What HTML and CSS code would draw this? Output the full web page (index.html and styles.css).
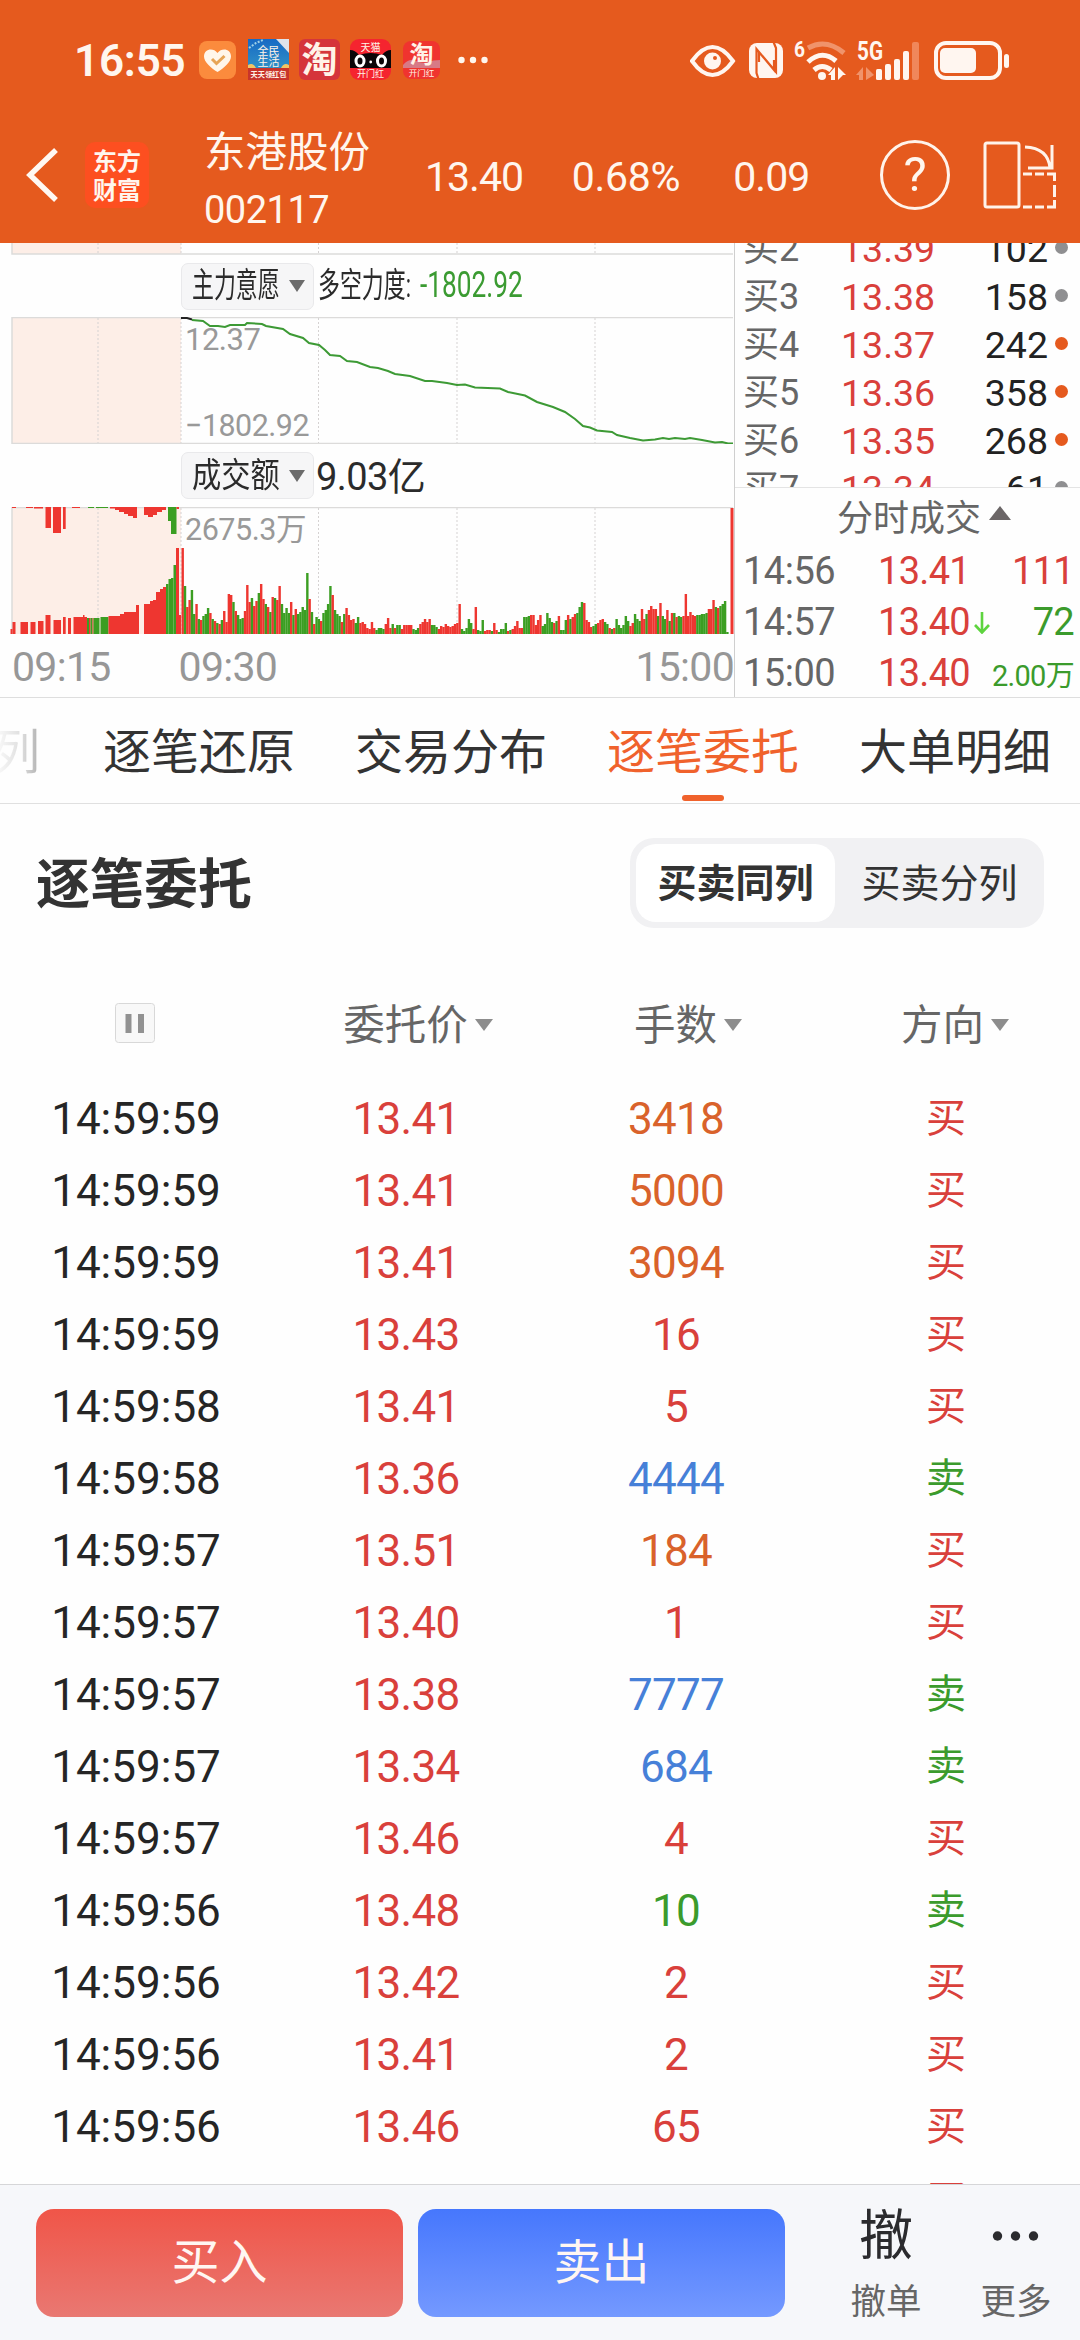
FILE: index.html
```html
<!DOCTYPE html>
<html lang="zh-CN">
<head>
    <meta charset="UTF-8">
    <meta name="viewport" content="width=device-width, initial-scale=1.0">
    <title>东港股份 002117</title>
    <link rel="stylesheet" href="styles.css">
</head>
<body>
    <header class="header">
        <div class="status">
            <span class="clock">16:55</span>
            <div class="notices">
                <svg class="app-sm" viewBox="0 0 37 38">
                    <rect width="37" height="38" rx="8" fill="#fb8b3d"/>
                    <path d="M18.500 31C12 27 5 21 5 15.500C5 8 14 6 18.500 12C23 6 32 8 32 15.500C32 21 25 27 18.500 31Z" fill="#fff6ea"/>
                    <path d="M13 18l4.500 4.500 8-7.500" fill="none" stroke="#e7a455" stroke-width="3"/>
                </svg>
                <svg class="app" viewBox="0 0 41 41">
                    <defs>
                        <linearGradient id="sky" x1="0" y1="0" x2="0" y2="1">
                            <stop offset="0" stop-color="#1769c4"/>
                            <stop offset="1" stop-color="#3aa0c8"/>
                        </linearGradient>
                    </defs>
                    <rect width="41" height="41" fill="url(#sky)"/>
                    <path d="M1 9l7-5 7-3" stroke="#9fd0e6" stroke-width="2" stroke-dasharray="2 1.500" fill="none"/>
                    <path d="M28 0h13v14z" fill="#dfe3ea"/>
                    <path d="M0 26q5-3 8 3h25q3-6 8-3v5H0z" fill="#f2c464"/>
                    <rect y="29" width="41" height="12" fill="#c8342b"/>
                    <text x="20.500" y="16" class="app-text" font-size="11">全民</text>
                    <text x="20.500" y="27" class="app-text" font-size="11">生活</text>
                    <text x="20.500" y="38" class="app-text bold" font-size="7.200" fill="#ffe9bd">天天领红包</text>
                </svg>
                <svg class="app" viewBox="0 0 41 41">
                    <rect width="41" height="41" rx="6" fill="#d5353b"/>
                    <text x="20.500" y="33.500" class="app-text bold" font-size="36">淘</text>
                </svg>
                <svg class="app" viewBox="0 0 41 41">
                    <rect width="41" height="41" rx="9" fill="#f5242f"/>
                    <path d="M0 11q5 0 9 5q12-4 23 0q4-5 9-5v18H0z" fill="#0b0608"/>
                    <text x="20.500" y="12" class="app-text" font-size="10">天猫</text>
                    <ellipse cx="10" cy="22" rx="4" ry="5" fill="none" stroke="#fff" stroke-width="3"/>
                    <ellipse cx="31.500" cy="22" rx="4" ry="5" fill="none" stroke="#fff" stroke-width="3"/>
                    <circle cx="20.700" cy="23" r="1.400" fill="#fff"/>
                    <text x="20.500" y="38" class="app-text" font-size="9">开门红</text>
                </svg>
                <svg class="app-sm last" viewBox="0 0 37 38">
                    <rect width="37" height="38" rx="8" fill="#f0342f"/>
                    <path d="M0 24q6-7 13-4t12 1 12-2v8H0z" fill="#d77a86"/>
                    <text x="18.500" y="22" class="app-text bold" font-size="24" fill="#ffe3cf">淘</text>
                    <text x="18.500" y="35" class="app-text" font-size="8.500">开门红</text>
                </svg>
                <svg class="dots" viewBox="0 0 30 8">
                    <circle cx="3.500" cy="4" r="3.200"/><circle cx="15" cy="4" r="3.200"/><circle cx="26.500" cy="4" r="3.200"/>
                </svg>
            </div>
            <svg class="system" viewBox="0 0 320 42">
                <!-- eye -->
                <path d="M2 22Q12 8 22.500 8T43 22Q33 36 22.500 36T2 22Z" fill="none" stroke="#fff6f0" stroke-width="4"/>
                <circle cx="22.500" cy="22" r="8.500"/>
                <circle cx="25" cy="19" r="2" fill="#e55a1e"/>
                <!-- nfc -->
                <rect x="59" y="4" width="34" height="35" rx="8"/>
                <path d="M68.500 40L66.500 34V10L84 31V21M83.500 3L86 9V33L69 13V23" fill="none" stroke="#e55a1e" stroke-width="2.200"/>
                <!-- wifi -->
                <text x="104" y="18" class="sys-text" font-size="22" textLength="11" lengthAdjust="spacingAndGlyphs">6</text>
                <path d="M118 9Q136 -1 154 14" fill="none" stroke="#f0936b" stroke-width="5"/>
                <path d="M118 23Q132 10 146 22" fill="none" stroke="#fff6f0" stroke-width="5"/>
                <path d="M124 31Q132 24 141 31" fill="none" stroke="#fff6f0" stroke-width="5"/>
                <circle cx="132" cy="37" r="4"/>
                <path d="M138 36l7-8v13h-4v-5zM148 28l8 8h-3l-5 5z"/>
                <!-- 5G signal -->
                <text x="167" y="21" class="sys-text" font-size="26" textLength="26" lengthAdjust="spacingAndGlyphs">5G</text>
                <path d="M166 36l7-8v13h-4v-5zM176 28l8 8-8 5z" fill="#f0936b"/>
                <rect x="186" y="30" width="6" height="11" rx="1.500"/>
                <rect x="195" y="25" width="6" height="16" rx="2"/>
                <rect x="204" y="20" width="6" height="21" rx="2"/>
                <rect x="213" y="12" width="6" height="29" rx="2"/>
                <rect x="222" y="3" width="7" height="38" rx="2" fill="#f0875b"/>
                <!-- battery -->
                <rect x="246" y="4" width="64" height="35" rx="10" fill="none" stroke="#fff6f0" stroke-width="4"/>
                <rect x="250" y="9" width="36" height="25" rx="5"/>
                <rect x="314" y="15" width="5" height="14" rx="2.500"/>
            </svg>
        </div>
        <div class="stockbar">
            <svg class="back" viewBox="0 0 34 56">
                <path d="M30 3L4 28L30 53" fill="none" stroke="#fff8f2" stroke-width="5.500"/>
            </svg>
            <div class="logo"><span>东方</span><span>财富</span></div>
            <div class="stock">
                <div class="stock-name">东港股份</div>
                <div class="stock-code">002117</div>
            </div>
            <div class="quote">
                <span>13.40</span>
                <span>0.68%</span>
                <span>0.09</span>
            </div>
            <div class="help">?</div>
            <svg class="rotate" viewBox="0 0 74 70">
                <g fill="none" stroke="#fff3ea" stroke-width="3">
                    <rect x="2" y="3" width="34" height="64" rx="2"/>
                    <path d="M42 7Q65 8 67 28M69 5V28H45"/>
                    <path d="M40 34h9M52 34h9M64 34h7.500v7M71.500 45v12M71.500 60v7H64M61 67h-9M49 67h-9"/>
                </g>
            </svg>
        </div>
    </header>

    <section class="market">
        <div class="charts">
            <svg class="strip" viewBox="0 0 734 12">
                <rect x="12" y="0" width="169" height="11" fill="#fdeee7"/>
                <path class="frame" d="M12 0V11H733"/>
                <path class="grid" d="M98 0V11M181 0V11M318.500 0V11M457 0V11M595 0V11"/>
            </svg>
            <div class="indicator">
                <button class="pick"><span class="narrow">主力意愿</span><i class="down"></i></button>
                <span class="narrow force">多空力度:</span>
                <span class="force-value">-1802.92</span>
            </div>
            <svg class="pane" viewBox="0 0 734 127">
                <rect x="12" y="1" width="169" height="126" fill="#fdeee7"/>
                <path class="grid" d="M98 1V126M181 1V126M318.500 1V126M457 1V126M595 1V126"/>
                <path class="frame" d="M733 .500H12V126.500H733"/>
                <path d="M181 1L187 1 192 2.500" fill="none" stroke="#222" stroke-width="2"/>
                <polyline class="force-line" points="192,3 203,4 210,9 218,9 225,10 230,8 245,8 247,6 262,7 266,9 283,12 290,17 303,21 309,26 319,28 325,33 330,38 340,39 347,44 357,45 370,50 378,51 388,54 395,57 410,59 425,64 432,64 447,66 457,68 465,67.500 475,70.500 500,71.500 508,75 525,78.500 537,85 553,90 565,95 575,102 583,109 590,110.500 597,113.500 612,115 617,118 630,121 643,123.500 655,122.500 663,121 669,122 675,121 685,122 690,121 702,123 715,125.500 722,125 728,126.500 733,126.500"/>
                <text x="185" y="33" class="scale">12.37</text>
                <text x="185" y="119" class="scale" textLength="124" lengthAdjust="spacingAndGlyphs">−1802.92</text>
            </svg>
            <div class="indicator amount">
                <button class="pick"><span class="narrow wide">成交额</span><i class="down"></i></button>
                <span class="total">9.03亿</span>
            </div>
            <svg class="pane" viewBox="0 0 734 127">
                <rect x="12" y="0" width="169" height="127" fill="#fdeee7"/>
                <path class="grid" d="M98 1V126M181 1V126M318.500 1V126M457 1V126M595 1V126"/>
                <path class="frame" d="M12 127V.500H733"/>
                <g id="bars"></g>
                <text x="185" y="33" class="scale" textLength="121" lengthAdjust="spacingAndGlyphs">2675.3万</text>
            </svg>
            <div class="axis"><span>09:15</span><span class="open">09:30</span><span class="close">15:00</span></div>
        </div>

        <div class="depth">
            <div class="book">
                <div class="level"><span>买2</span><b>13.39</b><em>102</em><i></i></div>
                <div class="level"><span>买3</span><b>13.38</b><em>158</em><i></i></div>
                <div class="level"><span>买4</span><b>13.37</b><em>242</em><i class="hot"></i></div>
                <div class="level"><span>买5</span><b>13.36</b><em>358</em><i class="hot"></i></div>
                <div class="level"><span>买6</span><b>13.35</b><em>268</em><i class="hot"></i></div>
                <div class="level"><span>买7</span><b>13.34</b><em>61</em><i></i></div>
            </div>
            <div class="ticks">
                <div class="ticks-title">分时成交<i class="up"></i></div>
                <div class="tick"><span>14:56</span><b>13.41</b><em class="red">111</em></div>
                <div class="tick">
                    <span>14:57</span>
                    <b>13.40<svg class="fall" viewBox="0 0 16 22"><path d="M8 0V20M1 13L8 20.500L15 13" fill="none" stroke="#5ed43f" stroke-width="2.600"/></svg></b>
                    <em class="green">72</em>
                </div>
                <div class="tick"><span>15:00</span><b>13.40</b><em class="green small">2.00万</em></div>
            </div>
        </div>
    </section>

    <nav class="tabs">
        <a class="cut">列</a>
        <a>逐笔还原</a>
        <a>交易分布</a>
        <a class="active">逐笔委托</a>
        <a>大单明细</a>
    </nav>

    <section class="orders">
        <div class="orders-head">
            <h2>逐笔委托</h2>
            <div class="switch">
                <button class="on">买卖同列</button>
                <button>买卖分列</button>
            </div>
        </div>
        <table>
            <thead>
                <tr>
                    <th><svg class="pause" viewBox="0 0 40 40"><rect x=".500" y=".500" width="39" height="39" rx="3" fill="#f8f8f8" stroke="#d8d8d8"/><path d="M13.500 11v19M26 11v19" stroke="#919191" stroke-width="6"/></svg></th>
                    <th class="sort">委托价<i class="down"></i></th>
                    <th class="sort">手数<i class="down"></i></th>
                    <th class="sort dir">方向<i class="down"></i></th>
                </tr>
            </thead>
            <tbody>
                <tr><td>14:59:59</td><td>13.41</td><td class="big">3418</td><td class="buy">买</td></tr>
                <tr><td>14:59:59</td><td>13.41</td><td class="big">5000</td><td class="buy">买</td></tr>
                <tr><td>14:59:59</td><td>13.41</td><td class="big">3094</td><td class="buy">买</td></tr>
                <tr><td>14:59:59</td><td>13.43</td><td class="buy">16</td><td class="buy">买</td></tr>
                <tr><td>14:59:58</td><td>13.41</td><td class="buy">5</td><td class="buy">买</td></tr>
                <tr><td>14:59:58</td><td>13.36</td><td class="block">4444</td><td class="sell">卖</td></tr>
                <tr><td>14:59:57</td><td>13.51</td><td class="big">184</td><td class="buy">买</td></tr>
                <tr><td>14:59:57</td><td>13.40</td><td class="buy">1</td><td class="buy">买</td></tr>
                <tr><td>14:59:57</td><td>13.38</td><td class="block">7777</td><td class="sell">卖</td></tr>
                <tr><td>14:59:57</td><td>13.34</td><td class="block">684</td><td class="sell">卖</td></tr>
                <tr><td>14:59:57</td><td>13.46</td><td class="buy">4</td><td class="buy">买</td></tr>
                <tr><td>14:59:56</td><td>13.48</td><td class="sell">10</td><td class="sell">卖</td></tr>
                <tr><td>14:59:56</td><td>13.42</td><td class="buy">2</td><td class="buy">买</td></tr>
                <tr><td>14:59:56</td><td>13.41</td><td class="buy">2</td><td class="buy">买</td></tr>
                <tr><td>14:59:56</td><td>13.46</td><td class="buy">65</td><td class="buy">买</td></tr>
                <tr class="peek"><td>14:59:55</td><td>13.41</td><td class="buy">34</td><td class="buy">买</td></tr>
            </tbody>
        </table>
    </section>

    <footer class="actions">
        <button class="trade buy-btn">买入</button>
        <button class="trade sell-btn">卖出</button>
        <div class="action"><span class="glyph">撤</span><span>撤单</span></div>
        <div class="action more">
            <svg class="glyph" viewBox="0 0 54 54"><circle cx="8.500" cy="27" r="4.700"/><circle cx="26.500" cy="27" r="4.700"/><circle cx="44.500" cy="27" r="4.700"/></svg>
            <span>更多</span>
        </div>
    </footer>

    <script src="script.js"></script>
</body>
</html>
```

FILE: styles.css
```css
* {
    margin: 0;
    padding: 0;
    box-sizing: border-box;
}

body {
    width: 1080px;
    height: 2340px;
    overflow: hidden;
    display: flex;
    flex-direction: column;
    background: #fefefe;
    color: #333;
    font-family: Roboto, "Noto Sans CJK SC", sans-serif;
}

button {
    border: 0;
    background: none;
    color: inherit;
    font-family: inherit;
}

b, em, i {
    font-weight: 400;
    font-style: normal;
}

svg {
    display: block;
    flex: none;
}

/* Header */
.header {
    height: 243px;
    flex: none;
    background: #e55a1e;
    color: #fff6ee;
}

.status {
    height: 119px;
    display: flex;
    align-items: center;
    padding-left: 74px;
}

.clock {
    width: 125px;
    padding-top: 2px;
    font-size: 44px;
    font-weight: 600;
    letter-spacing: -0.2px;
    line-height: 50px;
}

.notices {
    display: flex;
    align-items: center;
    width: 491px;
}

.app-sm {
    width: 37px;
    height: 38px;
    margin-right: 12px;
}

.app {
    width: 41px;
    height: 41px;
    margin-right: 10px;
}

.app-sm.last {
    margin: 0 18px 0 2px;
}

.app-text {
    text-anchor: middle;
    fill: #fff3e8;
}

.bold {
    font-weight: 700;
}

.dots {
    width: 30px;
    height: 8px;
    fill: #fff6ee;
}

.system {
    width: 320px;
    height: 42px;
    fill: #fff6f0;
}

.sys-text {
    font-weight: 700;
}

.stockbar {
    height: 112px;
    display: flex;
    align-items: center;
    padding-left: 26px;
}

.back {
    width: 34px;
    height: 56px;
    margin-right: 25px;
}

.logo {
    width: 64px;
    height: 66px;
    border-radius: 10px;
    background: #fd4f20;
    display: flex;
    flex-direction: column;
    align-items: center;
    justify-content: center;
    font-family: "Noto Sans CJK SC", sans-serif;
    font-size: 24px;
    font-weight: 700;
    line-height: 29px;
    padding-bottom: 2px;
}

.stock {
    width: 220px;
    padding: 14px 0 0 55px;
    white-space: nowrap;
}

.stock-name {
    font-size: 41.5px;
    line-height: 56px;
}

.stock-code {
    font-size: 38px;
    line-height: 58px;
    letter-spacing: -0.5px;
}

.quote {
    display: flex;
    width: 511px;
    padding: 3px 0 0 56px;
    font-size: 41px;
}

.quote span {
    width: 148px;
    letter-spacing: -1px;
}

.quote span:nth-child(2) {
    width: 163px;
    letter-spacing: -0.3px;
}

.help {
    width: 70px;
    height: 70px;
    border: 3px solid #fff3ea;
    border-radius: 50%;
    font-size: 49px;
    line-height: 64px;
    text-align: center;
}

.rotate {
    width: 74px;
    height: 70px;
    margin-left: 33px;
}

/* Charts */
.market {
    display: flex;
    flex: none;
    height: 455px;
    border-bottom: 1px solid #dedede;
}

.charts {
    width: 734px;
    flex: none;
}

.strip {
    width: 734px;
    height: 12px;
}

.pane {
    width: 734px;
    height: 127px;
}

.frame {
    fill: none;
    stroke: #dcdbda;
    stroke-width: 1.5;
}

.grid {
    stroke: #d5d2d2;
    stroke-width: 1;
    stroke-dasharray: 2 2;
}

.scale {
    font-size: 31px;
    letter-spacing: -0.5px;
    fill: #999;
}

.force-line {
    fill: none;
    stroke: #3d9a35;
    stroke-width: 2;
}

.indicator {
    height: 62px;
    display: flex;
    align-items: center;
    padding-left: 181px;
    color: #2b2b2b;
}

.indicator.amount {
    height: 63px;
}

.pick {
    width: 133px;
    height: 47px;
    border: 1px solid #e9e9eb;
    border-radius: 7px;
    background: #f6f6f7;
    display: flex;
    align-items: center;
    padding-left: 10px;
}

.narrow {
    display: block;
    width: 88px;
    font-size: 34px;
    line-height: 42px;
    padding-bottom: 2px;
    white-space: nowrap;
    text-align: left;
    transform: scaleX(0.645);
    transform-origin: left;
}

.narrow.wide {
    transform: scaleX(0.86);
}

.force {
    margin-left: 4px;
    width: 102px;
}

.force-value {
    width: 102px;
    font-size: 37px;
    line-height: 42px;
    padding-bottom: 2px;
    color: #3b9b32;
    white-space: nowrap;
    transform: scaleX(0.71);
    transform-origin: left;
}

.total {
    padding: 0 0 5px 2px;
    font-size: 38px;
    letter-spacing: -0.6px;
}

.down {
    display: inline-block;
    border: 8px solid transparent;
    border-top: 12px solid #6b6b6b;
    border-bottom: 0;
}

.pick .down {
    margin-left: 9px;
}

.axis {
    height: 63px;
    display: flex;
    align-items: center;
    padding: 2px 0 0 12px;
    font-size: 41px;
    letter-spacing: -0.7px;
    color: #979797;
}

.axis .open {
    margin-left: 68px;
}

.axis .close {
    margin-left: auto;
}

/* Order book */
.depth {
    flex: 1;
    border-left: 1px solid #cfcfcf;
}

.book {
    height: 245px;
    overflow: hidden;
    border-bottom: 1px solid #e4e4e4;
    padding-left: 8px;
}

.level {
    height: 48px;
    display: grid;
    grid-template-columns: 98px 110px 97px 13px;
    align-items: center;
    font-size: 37.5px;
    line-height: 48px;
}

/* the list is scrolled half a row */
.level:first-child {
    margin-top: -18px;
}

.level span {
    color: #666;
    font-size: 36px;
    white-space: nowrap;
}

.level b {
    color: #d9403b;
}

.level em {
    color: #222;
    text-align: right;
}

.level i {
    width: 13px;
    height: 13px;
    margin: -4px 0 0 7px;
    border-radius: 50%;
    background: #8f8f91;
}

.level i.hot {
    background: #e55a1e;
}

.ticks {
    padding: 0 6px 0 8px;
}

.ticks-title {
    height: 57px;
    display: flex;
    align-items: center;
    padding: 0 0 3px 94px;
    font-size: 36px;
    color: #666;
}

.up {
    border: 11px solid transparent;
    border-bottom: 14px solid #6b6667;
    border-top: 0;
    margin: -4px 0 0 8px;
}

.tick {
    height: 51px;
    display: flex;
    align-items: baseline;
    font-size: 38px;
    line-height: 53px;
}

.tick span {
    width: 135px;
    color: #666;
    letter-spacing: -0.5px;
}

.tick b {
    display: flex;
    align-items: center;
    color: #d9403b;
    letter-spacing: -0.7px;
}

.fall {
    width: 16px;
    height: 22px;
    margin-left: 4px;
}

.tick em {
    margin-left: auto;
    letter-spacing: -0.7px;
}

.tick .small {
    font-size: 29px;
}

.red {
    color: #d9403b;
}

.green {
    color: #3b9b2c;
}

/* Tabs */
.tabs {
    height: 106px;
    flex: none;
    display: flex;
    gap: 60px;
    border-bottom: 1px solid #e0e0e0;
    font-size: 48px;
    padding-top: 2px;
}

.tabs a {
    position: relative;
    flex: none;
    height: 103px;
    line-height: 105px;
}

.tabs .cut {
    width: 43px;
    padding-right: 3px;
    display: flex;
    justify-content: flex-end;
    background: linear-gradient(90deg, #f6f6f6, #dedede 50%, #a8a8a8);
    -webkit-background-clip: text;
    background-clip: text;
    color: transparent;
}

.tabs .active {
    color: #f0622c;
}

.tabs .active::after {
    content: "";
    position: absolute;
    left: 75px;
    bottom: 2px;
    width: 42px;
    height: 6px;
    border-radius: 3px;
    background: #f0622c;
}

/* Orders */
.orders {
    height: 1380px;
    flex: none;
    overflow: hidden;
}

.orders-head {
    height: 158px;
    display: flex;
    align-items: center;
    justify-content: space-between;
    padding: 0 36px;
}

.orders-head h2 {
    padding-top: 5px;
    font-size: 54px;
    line-height: 70px;
}

.switch {
    width: 414px;
    height: 90px;
    border-radius: 24px;
    background: #f1f1f3;
    display: flex;
    padding: 6px;
}

.switch button {
    width: 199px;
    padding-bottom: 7px;
    border-radius: 20px;
    font-size: 39px;
}

.switch .on {
    background: #fff;
    font-weight: 600;
}

.switch button:last-child {
    padding-left: 10px;
}

table {
    width: 1080px;
    table-layout: fixed;
    border-collapse: collapse;
}

th {
    height: 121px;
    padding-bottom: 2px;
    font-size: 41.5px;
    font-weight: 400;
    color: #666;
}

.pause {
    width: 40px;
    height: 40px;
    margin: 2px auto 0;
}

.sort {
    padding-left: 26px;
}

.sort.dir {
    padding-left: 20px;
}

.sort .down {
    border-width: 12px 9px 0;
    border-top-color: #8d8d8d;
    margin-left: 7px;
    vertical-align: 9px;
}

td {
    height: 72px;
    padding-left: 2px;
    font-size: 44px;
    line-height: 72px;
    text-align: center;
    color: #d9403b;
}

td:first-child {
    color: #252525;
}

td:nth-child(2) {
    letter-spacing: -0.7px;
}

td:nth-child(3) {
    letter-spacing: -0.7px;
}

td:last-child {
    font-size: 40px;
}

/* last row sits almost entirely under the bottom bar */
.peek td {
    padding-top: 2px;
}

td.big {
    color: #d9622b;
}

td.block {
    color: #4680d8;
}

td.buy {
    color: #d9403b;
}

td.sell {
    color: #3b9b2c;
}

/* Bottom bar */
.actions {
    flex: 1;
    display: flex;
    border-top: 1px solid #d6d6d8;
    background: #f6f7fa;
    padding: 24px 0 0 36px;
}

.trade {
    width: 367px;
    height: 108px;
    margin-right: 15px;
    padding-bottom: 10px;
    border-radius: 18px;
    color: #fff6f2;
    font-size: 48px;
}

.buy-btn {
    background: linear-gradient(#f05548, #e97872);
}

.sell-btn {
    background: linear-gradient(#4677fd, #7499ff);
}

.action {
    width: 96px;
    margin-left: 38px;
    display: flex;
    flex-direction: column;
    align-items: center;
    font-size: 35.5px;
    line-height: 50px;
    color: #666;
}

.action.more {
    margin-left: 34px;
}

.action .glyph {
    height: 54px;
    margin-bottom: 14px;
    font-size: 54px;
    line-height: 56px;
    color: #2b2b2e;
    fill: #2b2b2e;
}
```

FILE: script.js
```javascript
const RED = "#ee3630";
const GREEN = "#3b9e22";
const BASE = 127;
const bars = document.getElementById("bars");

function addBar(x, y, width, height, color) {
    const rect = document.createElementNS("http://www.w3.org/2000/svg", "rect");
    rect.setAttribute("x", x);
    rect.setAttribute("y", y);
    rect.setAttribute("width", width);
    rect.setAttribute("height", height);
    rect.setAttribute("fill", color === "g" ? GREEN : RED);
    bars.appendChild(rect);
}

// Call auction, matched volume: [x, width, height, color]
const auction = [
    [10.5, 2, 5, "r"], [12.5, 3, 12, "r"], [20.5, 7.5, 12, "r"], [30.5, 5, 12, "r"], [38, 5.5, 13, "r"],
    [45.5, 5, 19, "r"], [53.5, 7.5, 14, "r"], [63, 2.7, 17, "r"], [68, 3, 16, "r"], [73.5, 13.5, 17, "r"],
    [83, 1.5, 19, "r"], [87, 2, 16, "g"], [89, 1.5, 16, "r"], [90.5, 2, 16, "g"], [92.5, 1, 16, "r"],
    [93.5, 6, 16, "g"], [100.5, 8, 17, "g"], [108.5, 11.5, 18, "r"], [120, 4, 20, "r"], [124, 12, 22, "r"],
    [136, 3, 29, "r"], [144, 6, 30, "r"], [150, 3, 33, "r"], [153, 3, 34, "r"], [156, 4, 42, "r"],
    [160, 3, 45, "r"], [163, 3, 47, "r"], [166, 2.5, 50, "g"], [168.5, 2.5, 55, "g"], [171, 2.5, 56, "g"],
    [173.5, 2.5, 69, "g"], [176, 3, 86, "r"], [179, 2, 19, "r"]
];

// Call auction, unmatched volume hanging from the top
const unmatched = [
    [12, 4, 1, "r"], [26, 7, 1, "r"], [34, 9, 1.5, "r"], [45.5, 5.5, 21, "r"], [53, 8, 26, "r"], [63, 2.7, 22, "r"],
    [72, 8, 1, "r"], [88, 6, 1, "g"], [96, 12, 1, "g"], [110, 5, 1.5, "r"], [115, 4, 3, "r"], [119, 5, 5, "r"],
    [124, 4, 7, "r"], [128, 5, 9, "r"], [133, 4, 11, "r"], [144, 4, 8, "r"], [148, 5, 10, "r"],
    [153, 4, 8, "r"], [157, 5, 5, "r"], [162, 4, 3, "r"], [168, 3, 14, "g"], [171, 5.5, 27, "g"], [176.5, 2.5, 2, "r"]
];

// One bar per minute from 09:30
const minutes = "r86 g48 r27 r34 g44 g20 r30 g15 r14 g18 g20 g26 r21 g15 r13 g11 r10 g14 r23 r12 " +
    "r40 r39 g32 r23 g19 g15 g16 r23 r49 r32 g36 r28 r33 g41 r50 r35 g30 r27 g22 r37 " +
    "g36 r34 r48 g30 g21 g26 g21 r32 g19 r25 g20 g22 g27 g24 g61 r35 g22 r10 g17 g15 " +
    "r13 g21 g24 g30 g48 r39 g24 g20 g18 r12 g20 r26 r19 r14 r15 g11 g17 r11 r12 r10 " +
    "r6 r5 r12 r6 g4 g6 g6 g5 r10 r16 r6 g10 r6 g9 g9 r5 r9 r9 r9 r9 " +
    "g5 g4 g6 r10 r12 r15 r12 r15 g9 g9 g7 r5 r8 r7 r10 r8 r7 r8 r10 r11 " +
    "r30 g5 g3 g6 g15 g11 r5 r27 g4 g3 g14 r3 r4 r4 g3 r11 r4 g2 g5 g5 " +
    "g11 r3 g4 r5 r8 r13 r6 r6 g17 g17 g18 r19 r19 r9 r14 r19 g8 g10 g21 g16 " +
    "g12 r11 g13 r18 g4 g4 g14 r19 g15 r17 r20 g21 g27 g32 r31 r14 r12 r7 g8 g10 " +
    "r11 r14 r15 g12 g10 r6 g5 r6 g15 g9 g6 g9 g18 g13 r8 r11 g20 g15 g13 r25 " +
    "r15 g20 r24 r28 r25 r25 g18 r31 g18 g15 r24 g13 r21 g21 r17 g18 g17 r18 r40 r18 " +
    "r22 r19 r18 g19 g19 g20 g20 g21 r25 r25 r34 g27 r26 g28 g30 g33 g2";

auction.forEach(([x, w, h, c]) => addBar(x, BASE - h, w, h, c));
unmatched.forEach(([x, w, h, c]) => addBar(x, 0, w, h, c));

const list = minutes.split(" ");
const step = 547 / list.length;
list.forEach((item, i) => {
    const h = Number(item.slice(1));
    addBar(181.5 + i * step, BASE - h, step + 0.1, h, item[0]);
});

// closing auction
addBar(730.5, 1, 3, 126, "r");
```
